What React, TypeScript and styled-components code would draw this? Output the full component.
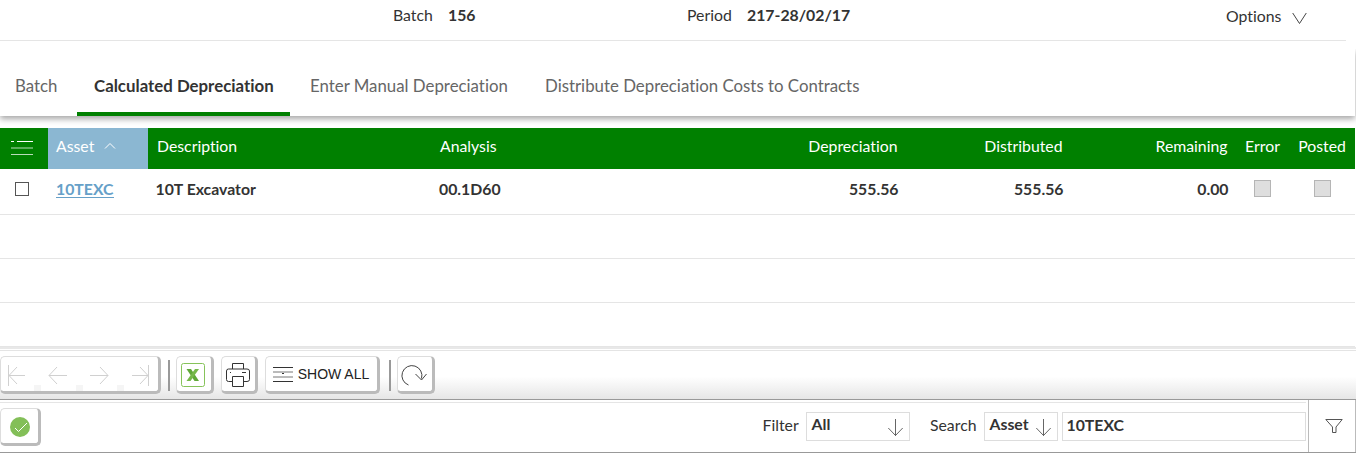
import React from "react";
import styled, { createGlobalStyle } from "styled-components";

const Global = createGlobalStyle`
  * { box-sizing: border-box; }
  body { margin: 0; background: #fff; color: #333; font: 15.8px/20px Lato, sans-serif; font-variant-ligatures: none; overflow: hidden; }
  svg { display: block; fill: none; flex: none; }
`;

const Page = styled.div`width: 1356px; height: 453px; display: flex; flex-direction: column;`;

const Header = styled.header`
  display: flex; align-items: flex-start; flex: none;
  width: 1346px; height: 41px; padding: 5px 0 0 393px;
  border-bottom: 1px solid #e5e5e5;
`;
const Text = styled.span<{ $w?: number; $bold?: boolean }>`
  white-space: nowrap; flex: none;
  width: ${p => (p.$w ? `${p.$w}px` : "auto")};
  font-weight: ${p => (p.$bold ? 700 : 400)};
`;
const Options = styled.div`display: flex; gap: 11px; padding-top: 1px;`;
const Chevron = styled.svg`margin-top: 6px;`;

const Tabs = styled.nav`
  display: flex; flex: none; width: 1355px; height: 67px; margin-top: 8px;
  font-size: 16.84px;
  box-shadow: 0 3px 6px rgba(0, 0, 0, 0.35);
  clip-path: inset(0 -1px -12px 0);
`;
const Tab = styled.div<{ $w: number; $pad: number; $active?: boolean }>`
  width: ${p => p.$w}px; padding: 27px 0 0 ${p => p.$pad}px; white-space: nowrap;
  color: ${p => (p.$active ? "#333" : "#666")};
  font-weight: ${p => (p.$active ? 700 : 400)};
  border-bottom: ${p => (p.$active ? "4px solid #008000" : "0")};
`;

const Row = styled.div`
  display: grid; flex: none; width: 1355px; height: 44px;
  grid-template-columns: 48px 100px 283px 311px 165px 165px 165px 51px 67px;
  border-bottom: 1px solid #e5e5e5;
`;
const BodyRow = styled(Row)`font-weight: 700;`;
const FirstRow = styled(BodyRow)`height: 46px;`;
const HeadRow = styled(Row)`height: 41px; margin-top: 12px; background: #008000; color: #fff; border: 0;`;
const Cell = styled.div<{ $align?: string; $pad?: number; $sorted?: boolean }>`
  display: flex; align-items: flex-start; white-space: nowrap;
  justify-content: ${p => p.$align ?? "flex-start"};
  padding: ${p => (p.$align === "center" ? "8px 0 0" : `8px ${p.$pad ?? 9}px 0`)};
  background: ${p => (p.$sorted ? "#8bb7d2" : "transparent")};
  ${BodyRow} & { padding-top: 10px; }
`;
const MenuIcon = styled.svg`margin: 4px 4px 0 0;`;
const SortIcon = styled.svg`margin: 1px 0 0 10px;`;
const AssetLink = styled.a`
  color: #66a0c8; border-bottom: 1px solid #66a0c8; line-height: 17px; margin-top: 1px;
`;
const Check = styled.span`width: 14px; height: 14px; margin: 3px 5px 0 0; border: 1px solid #555;`;
const Flag = styled.span`width: 17px; height: 17px; margin-top: 1px; border: 1px solid #b5b5b5; background: #dedede;`;
const PostedCell = styled(Cell)`padding-left: 1px;`;

const Toolbar = styled.div`
  display: flex; flex: none; height: 53px; padding-top: 10px;
  border-top: 2px solid #e8e8e8; border-bottom: 1px solid #999;
  background: linear-gradient(#fff 0 1px, #e4e4e4 1px 2px, #fff 2px 55%, #e6e6e6);
  background-origin: padding-box;
`;
const Button = styled.button<{ $w: number; $ml?: number }>`
  display: flex; align-items: center; justify-content: center; flex: none;
  width: ${p => p.$w}px; height: 38px; margin: -3px 0 0 ${p => p.$ml ?? 0}px; padding: 2px 2px 0 0;
  background: #fff; border: 1px solid #ddd; border-right: 3px solid #bbb; border-bottom: 3px solid #bbb;
  border-radius: 5px; font: 14px "Liberation Sans", sans-serif; color: #222;
`;
const NavGroup = styled(Button)`justify-content: flex-start; padding: 2px 0 0 3px;`;
const Notch = styled.i`width: 7px; height: 6px; margin: 0 4px 0 5.4px; align-self: flex-end; background: #f5f5f5;`;
const ShowAll = styled(Button)`gap: 5px; padding: 0 1px 0 0;`;
const Divider = styled.i<{ $ml: number }>`width: 2px; height: 31px; margin: 1px 0 0 ${p => p.$ml}px; background: #999;`;

const Footer = styled.footer`
  display: flex; flex: none; height: 53px; border-bottom: 1px solid #999;
`;
const SearchBar = styled.div`
  display: flex; width: 1306px; height: 50px; margin-top: 2px; border-top: 1px solid #e5e5e5; padding-top: 5px;
`;
const Confirm = styled(Button)`margin-top: 0; padding: 2px 0 0;`;
const Label = styled.label<{ $ml: number; $w: number }>`
  width: ${p => p.$w}px; margin: 7px 0 0 ${p => p.$ml}px; white-space: nowrap;
`;
const Field = styled.div<{ $w: number }>`
  display: flex; justify-content: space-between; width: ${p => p.$w}px; height: 29px;
  margin-top: 4px; padding: 1px 5px 0 4.5px; border: 1px solid #ddd; font-weight: 700;
  & svg { margin-top: 4px; }
`;
const SearchInput = styled(Field)`margin-left: 4px; padding: 2px 3.5px;`;
const FilterButton = styled.div`
  display: flex; justify-content: center; width: 48px; height: 52px; margin-left: 2px; padding: 18px 0 0 3px;
  border-left: 1px solid #bbb; border-right: 1px solid #bbb;
`;

const NavArrow = ({ back, end }: { back?: boolean; end?: boolean }) => (
  <svg width="25" height="21" stroke="#d0d0d0" transform={back ? undefined : "scale(-1 1)"}>
    {end ? <path d="M4.5 0V21M5 10.5H21M13 2L5 10.5L13 19" /> : <path d="M4 10.5H22M12 2L4 10.5L12 19" />}
  </svg>
);
const DownArrow = () => (
  <svg width="16" height="19" stroke="#666"><path d="M7.500 1V18M.3 10L7.500 17.500L14.700 10" /></svg>
);

export default function App() {
  return (
    <>
      <Global />
      <Page>
        <Header>
          <Text $w={55}>Batch</Text>
          <Text $w={239} $bold>156</Text>
          <Text $w={60}>Period</Text>
          <Text $w={479} $bold>217-28/02/17</Text>
          <Options>
            <Text>Options</Text>
            <Chevron width="15" height="13" stroke="#444"><path d="M.7 1L7.500 11.500L14.300 1" /></Chevron>
          </Options>
        </Header>
        <Tabs>
          <Tab $w={77} $pad={15}>Batch</Tab>
          <Tab $w={213} $pad={17} $active>Calculated Depreciation</Tab>
          <Tab $w={235} $pad={20}>Enter Manual Depreciation</Tab>
          <Tab $w={400} $pad={20}>Distribute Depreciation Costs to Contracts</Tab>
        </Tabs>
        <HeadRow>
          <Cell $align="center">
            <MenuIcon width="22" height="16" stroke="#b9dcb9">
              <path d="M0 1.500H3M6 1.500H22" stroke="#fff" /><path d="M0 8H22M0 14.500H22" />
            </MenuIcon>
          </Cell>
          <Cell $sorted $pad={8}>Asset<SortIcon width="12" height="16" stroke="#fff"><path d="M1 11.500L6 6.500L11 11.500" /></SortIcon></Cell>
          <Cell>Description</Cell>
          <Cell>Analysis</Cell>
          <Cell $align="flex-end" $pad={9.5}>Depreciation</Cell>
          <Cell $align="flex-end" $pad={9.5}>Distributed</Cell>
          <Cell $align="flex-end" $pad={9.5}>Remaining</Cell>
          <Cell $align="center">Error</Cell>
          <PostedCell $align="center">Posted</PostedCell>
        </HeadRow>
        <FirstRow>
          <Cell $align="center"><Check /></Cell>
          <Cell $pad={8}><AssetLink>10TEXC</AssetLink></Cell>
          <Cell $pad={7.5}>10T Excavator</Cell>
          <Cell $pad={8}>00.1D60</Cell>
          <Cell $align="flex-end" $pad={8.5}>555.56</Cell>
          <Cell $align="flex-end" $pad={8.5}>555.56</Cell>
          <Cell $align="flex-end" $pad={8.5}>0.00</Cell>
          <Cell $align="center"><Flag /></Cell>
          <PostedCell $align="center"><Flag /></PostedCell>
        </FirstRow>
        <BodyRow />
        <BodyRow />
        <BodyRow />
        <Toolbar>
          <NavGroup $w={161}>
            <NavArrow back end /><Notch /><NavArrow back /><Notch /><NavArrow /><Notch /><NavArrow end />
          </NavGroup>
          <Divider $ml={7} />
          <Button $w={38} $ml={6}>
            <svg width="24" height="24">
              <rect x=".5" y=".5" width="23" height="23" rx="2" stroke="#86c35a" />
              <path d="M5.500 6H10L18 18H13.500Z" fill="#5fa838" />
              <path d="M14 6H18L9.500 18H5.500Z" fill="#76b84a" />
            </svg>
          </Button>
          <Button $w={37} $ml={7}>
            <svg width="24" height="24" stroke="#333">
              <path d="M6.500 6V.500H17.500V6M6 18.500H2.500Q.500 18.500 .500 16.500V8Q.500 6 2.500 6H21Q23.500 6 23.500 8V16.500Q23.500 18.500 21 18.500H18M6.500 13.500H17.500V23.500H6.500ZM4 9.500H5M16 9.500H20" />
            </svg>
          </Button>
          <ShowAll $w={115} $ml={7}>
            <svg width="20" height="18" stroke="#333">
              <path d="M0 2.500H20M0 16.500H20M9 8.500H11" /><path d="M0 7H20M0 12H20" stroke="#777" />
            </svg>
            SHOW ALL
          </ShowAll>
          <Divider $ml={9} />
          <Button $w={38} $ml={6}>
            <svg width="26" height="21" stroke="#444"><path d="M7.500 20A10 10 0 1 1 20.500 13.500M14.500 9L20.500 15L25.500 9" /></svg>
          </Button>
        </Toolbar>
        <Footer>
          <SearchBar>
            <Confirm $w={41}>
              <svg width="20" height="20"><circle cx="10" cy="10" r="10" fill="#83bf58" /><path d="M5 11L8.500 14.500L17 6" stroke="#fff" /></svg>
            </Confirm>
            <Label $ml={721.5} $w={43.5}>Filter</Label>
            <Field $w={104}>All<DownArrow /></Field>
            <Label $ml={20} $w={54}>Search</Label>
            <Field $w={74}>Asset<DownArrow /></Field>
            <SearchInput $w={244}>10TEXC</SearchInput>
          </SearchBar>
          <FilterButton>
            <svg width="18" height="16" stroke="#555"><path d="M.8 1.500H17.200L11 9V14.500H7.500V9Z" /></svg>
          </FilterButton>
        </Footer>
      </Page>
    </>
  );
}
